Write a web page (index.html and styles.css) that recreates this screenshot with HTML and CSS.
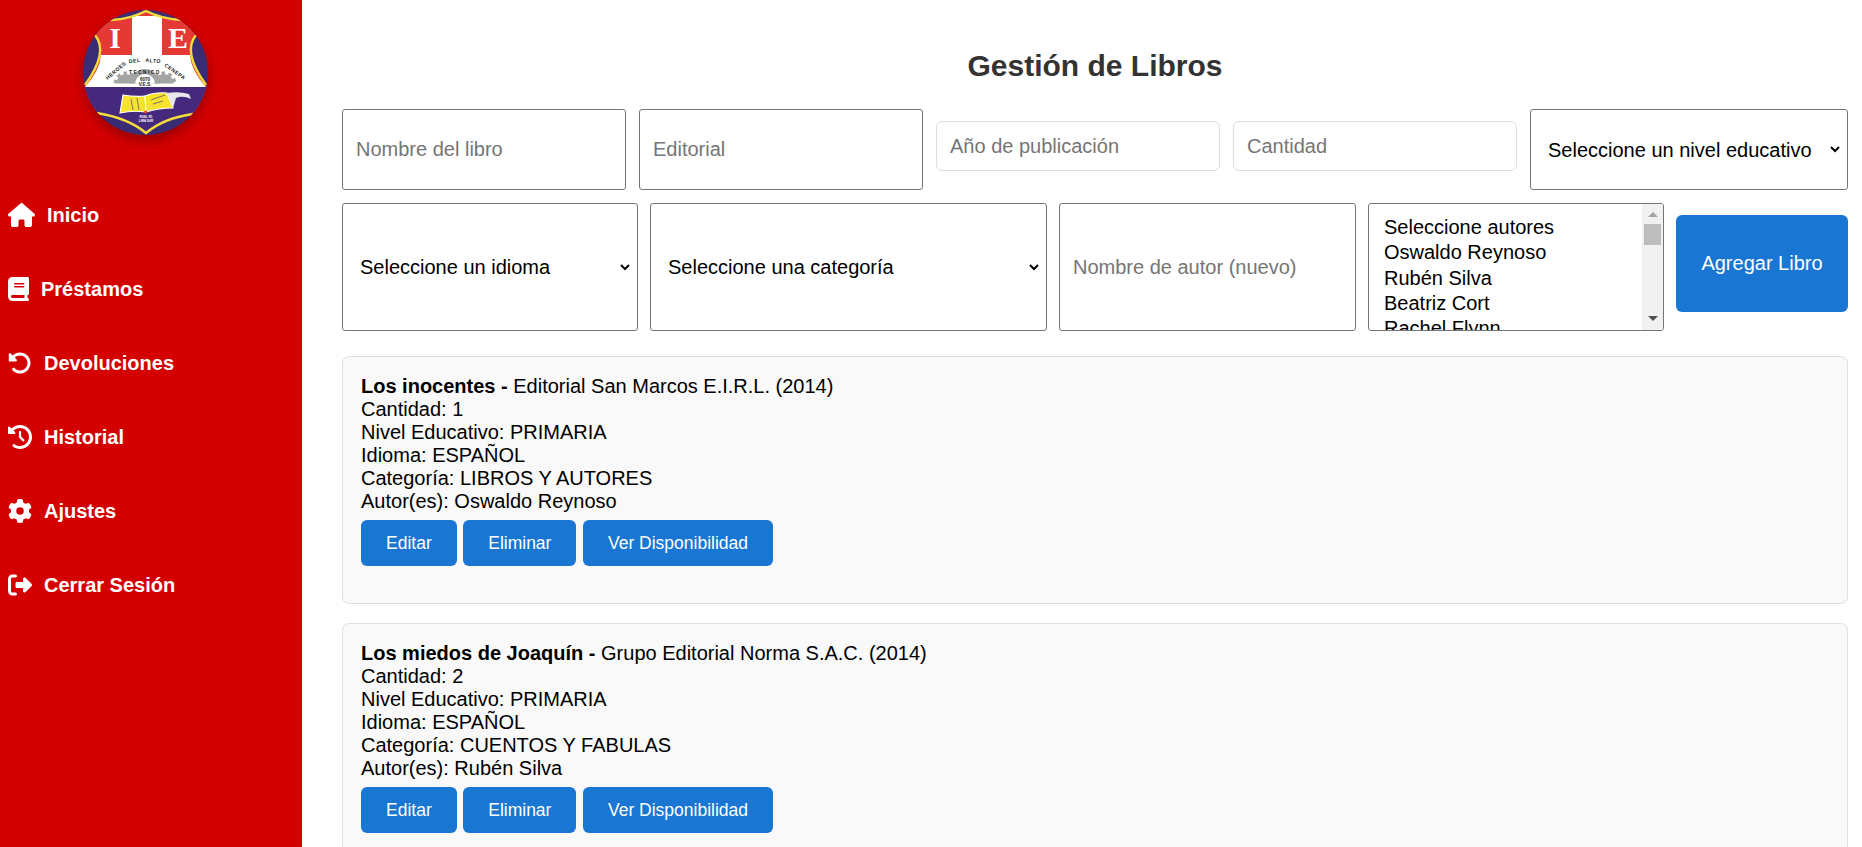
FILE: index.html
```html
<!DOCTYPE html>
<html lang="es">
<head>
    <meta charset="UTF-8">
    <meta name="viewport" content="width=device-width, initial-scale=1.0">
    <title>Gestión de Libros</title>
    <link rel="stylesheet" href="styles.css">
</head>
<body>
    <aside class="sidebar">
        <div class="logo">
            <svg viewBox="0 0 125 125" width="125" height="125" aria-label="Logo I.E.">
                <defs>
                    <clipPath id="logoClip"><circle cx="62.5" cy="62.5" r="62.5"/></clipPath>
                    <clipPath id="gearClip"><rect x="0" y="50" width="125" height="23.5"/></clipPath>
                </defs>
                <g clip-path="url(#logoClip)">
                    <rect width="125" height="125" fill="#382c74"/>
                    <!-- escudo -->
                    <path d="M12 25 L24 10 Q48 9 63 0 Q78 9 101 10 L113 25 Q99 42 123 76 L123 104 L110 104 Q81 108 63 124 Q45 108 14 103 L2 104 L2 76 Q26 42 12 25Z" fill="#e53935"/>
                    <rect x="49" y="6" width="30" height="39" fill="#fff"/>
                    <path d="M18 45 H107 Q108 60 123 77 H2 Q17 60 18 45Z" fill="#fff"/>
                    <path d="M0 77 H125 V103 L110 104 Q81 108 63 124 Q45 108 14 103 L0 103Z" fill="#45297d"/>
                    <path d="M28 10 Q48 9 63 1 Q78 9 100 10" fill="none" stroke="#f5dc3c" stroke-width="2.4"/>
                    <path d="M12 25 Q26 42 2 75" fill="none" stroke="#f5dc3c" stroke-width="2.4"/>
                    <path d="M113 25 Q99 42 123 75" fill="none" stroke="#f5dc3c" stroke-width="2.4"/>
                    <path d="M14 103 Q45 108 63 123 Q81 108 110 104" fill="none" stroke="#f5dc3c" stroke-width="2.4"/>
                    <text x="32" y="38" class="logo-letter" text-anchor="middle">I</text>
                    <text x="95" y="38" class="logo-letter" text-anchor="middle">E</text>
                    <!-- engranajes -->
                    <g clip-path="url(#gearClip)" fill="#a4a4a4" stroke="#a4a4a4">
                        <circle cx="43" cy="74" r="10" stroke="none"/>
                        <circle cx="43" cy="74" r="11" fill="none" stroke-width="3" stroke-dasharray="3.5 3.5"/>
                        <circle cx="81" cy="74" r="10" stroke="none"/>
                        <circle cx="81" cy="74" r="11" fill="none" stroke-width="3" stroke-dasharray="3.5 3.5"/>
                        <circle cx="62" cy="74" r="15" stroke="none"/>
                        <circle cx="62" cy="74" r="10" fill="#fff" stroke="none"/>
                    </g>
                    <text class="logo-word" transform="translate(34 62) rotate(-40)" text-anchor="middle">HEROES</text>
                    <text class="logo-word" transform="translate(52 52.5) rotate(-8)" text-anchor="middle">DEL</text>
                    <text class="logo-word" transform="translate(70 52.5) rotate(6)" text-anchor="middle">ALTO</text>
                    <text class="logo-word" transform="translate(91 63) rotate(35)" text-anchor="middle">CENEPA</text>
                    <text x="62" y="64" class="logo-tiny" text-anchor="middle" letter-spacing="1.6">TECNICO</text>
                    <text x="62" y="70.5" class="logo-tiny" text-anchor="middle">6070</text>
                    <text x="62" y="76" class="logo-tiny" text-anchor="middle">V.E.S.</text>
                    <!-- libro -->
                    <path d="M40 85 Q52 87 62 86 L63 102 Q50 100 37 103Z" fill="#f7e22e" stroke="#fff" stroke-width="1.1"/>
                    <path d="M62 86 Q72 82 84 83 L90 98 Q76 98 63 102Z" fill="#f7e22e" stroke="#fff" stroke-width="1.1"/>
                    <path d="M84 83 Q96 81 106 84 L108 89 Q100 85 93 88 L90 98Z" fill="#e8e6ee"/>
                    <path d="M48 89 L50 100 M54 88 L56 100 M68 90 L82 85 M70 94 L80 91" stroke="#666" stroke-width="0.9" fill="none"/>
                    <circle cx="62.7" cy="102" r="1.5" fill="#e53935"/>
                    <text x="63" y="108" class="logo-micro" text-anchor="middle">RGEL R1</text>
                    <text x="63" y="112" class="logo-micro" text-anchor="middle">LIMA SUR</text>
                </g>
            </svg>
        </div>
        <nav class="menu">
            <a class="menu-item" href="#">
                <svg class="menu-icon" viewBox="0 0 576 512"><path d="M575.8 255.5c0 18-15 32.1-32 32.1h-32l.7 160.2c0 2.7-.2 5.4-.5 8.1V472c0 22.1-17.9 40-40 40H456c-1.1 0-2.2 0-3.3-.1c-1.4 .1-2.8 .1-4.2 .1H416 392c-22.1 0-40-17.9-40-40V448 384c0-17.7-14.3-32-32-32H256c-17.7 0-32 14.3-32 32v64 24c0 22.1-17.9 40-40 40H160 128.1c-1.5 0-3-.1-4.5-.2c-1.2 .1-2.4 .2-3.6 .2H104c-22.1 0-40-17.9-40-40V360c0-.9 0-1.9 .1-2.8V287.6H32c-18 0-32-14-32-32.1c0-9 3-17 10-24L266.4 8c7-7 15-8 22-8s15 2 21 7L564.8 231.5c8 7 12 15 11 24z"/></svg>
                Inicio
            </a>
            <a class="menu-item" href="#">
                <svg class="menu-icon" viewBox="0 0 448 512"><path d="M96 0C43 0 0 43 0 96V416c0 53 43 96 96 96H384h32c17.7 0 32-14.3 32-32s-14.3-32-32-32V384c17.7 0 32-14.3 32-32V32c0-17.7-14.3-32-32-32H384 96zm0 384H352v64H96c-17.7 0-32-14.3-32-32s14.3-32 32-32zm32-240c0-8.8 7.2-16 16-16H336c8.8 0 16 7.2 16 16s-7.2 16-16 16H144c-8.8 0-16-7.2-16-16zm16 48H336c8.8 0 16 7.2 16 16s-7.2 16-16 16H144c-8.8 0-16-7.2-16-16s7.2-16 16-16z"/></svg>
                Préstamos
            </a>
            <a class="menu-item" href="#">
                <svg class="menu-icon" viewBox="0 0 512 512"><path d="M48.5 224H40c-13.3 0-24-10.7-24-24V72c0-9.7 5.8-18.5 14.8-22.2s19.3-1.7 26.2 5.2L98.6 96.6c87.6-86.5 228.7-86.2 315.8 1c87.5 87.5 87.5 229.3 0 316.8s-229.3 87.5-316.8 0c-12.5-12.5-12.5-32.8 0-45.3s32.8-12.5 45.3 0c62.5 62.5 163.8 62.5 226.3 0s62.5-163.8 0-226.3c-62.2-62.2-162.7-62.5-225.3-1L185 183c6.9 6.9 8.9 17.2 5.2 26.2s-12.5 14.8-22.2 14.8H48.5z"/></svg>
                Devoluciones
            </a>
            <a class="menu-item" href="#">
                <svg class="menu-icon" viewBox="0 0 512 512"><path d="M75 75L41 41C25.9 25.9 0 36.6 0 57.9V168c0 13.3 10.7 24 24 24H134.1c21.4 0 32.1-25.9 17-41l-30.8-30.8C155 85.5 203 64 256 64c106 0 192 86 192 192s-86 192-192 192c-40.8 0-78.6-12.7-109.7-34.4c-14.5-10.1-34.4-6.6-44.6 7.9s-6.6 34.4 7.9 44.6C151.2 495 201.7 512 256 512c141.4 0 256-114.6 256-256S397.4 0 256 0C185.3 0 121.3 28.7 75 75zm181 53c-13.3 0-24 10.7-24 24V256c0 6.4 2.5 12.5 7 17l72 72c9.4 9.4 24.6 9.4 33.9 0s9.4-24.6 0-33.9l-65-65V152c0-13.3-10.7-24-24-24z"/></svg>
                Historial
            </a>
            <a class="menu-item" href="#">
                <svg class="menu-icon" viewBox="0 0 512 512"><path d="M495.9 166.6c3.2 8.7 .5 18.4-6.4 24.6l-43.3 39.4c1.1 8.3 1.7 16.8 1.7 25.4s-.6 17.1-1.7 25.4l43.3 39.4c6.9 6.2 9.6 15.9 6.4 24.6c-4.4 11.9-9.7 23.3-15.8 34.3l-4.7 8.1c-6.6 11-14 21.4-22.1 31.2c-5.9 7.2-15.7 9.6-24.5 6.8l-55.7-17.7c-13.4 10.3-28.2 18.9-44 25.4l-12.5 57.1c-2 9.1-9 16.3-18.2 17.8c-13.8 2.3-28 3.5-42.5 3.5s-28.7-1.2-42.5-3.5c-9.2-1.5-16.2-8.7-18.2-17.8l-12.5-57.1c-15.8-6.5-30.6-15.1-44-25.4L83.1 425.9c-8.8 2.8-18.6 .3-24.5-6.8c-8.1-9.8-15.5-20.2-22.1-31.2l-4.7-8.1c-6.1-11-11.4-22.4-15.8-34.3c-3.2-8.7-.5-18.4 6.4-24.6l43.3-39.4C64.6 273.1 64 264.6 64 256s.6-17.1 1.7-25.4L22.4 191.2c-6.9-6.2-9.6-15.9-6.4-24.6c4.4-11.9 9.7-23.3 15.8-34.3l4.7-8.1c6.6-11 14-21.4 22.1-31.2c5.9-7.2 15.7-9.6 24.5-6.8l55.7 17.7c13.4-10.3 28.2-18.9 44-25.4l12.5-57.1c2-9.1 9-16.3 18.2-17.8C227.3 1.2 241.5 0 256 0s28.7 1.2 42.5 3.5c9.2 1.5 16.2 8.7 18.2 17.8l12.5 57.1c15.8 6.5 30.6 15.1 44 25.4l55.7-17.7c8.8-2.8 18.6-.3 24.5 6.8c8.1 9.8 15.5 20.2 22.1 31.2l4.7 8.1c6.1 11 11.4 22.4 15.8 34.3zM256 336a80 80 0 1 0 0-160 80 80 0 1 0 0 160z"/></svg>
                Ajustes
            </a>
            <a class="menu-item" href="#">
                <svg class="menu-icon" viewBox="0 0 512 512"><path d="M377.9 105.9L500.7 228.7c7.2 7.2 11.3 17.1 11.3 27.3s-4.1 20.1-11.3 27.3L377.9 406.1c-6.4 6.4-15 9.9-24 9.9c-18.7 0-33.9-15.2-33.9-33.9l0-62.1-128 0c-17.7 0-32-14.3-32-32l0-64c0-17.7 14.3-32 32-32l128 0 0-62.1c0-18.7 15.2-33.9 33.9-33.9c9 0 17.6 3.6 24 9.9zM160 96L96 96c-17.7 0-32 14.3-32 32l0 256c0 17.7 14.3 32 32 32l64 0c17.7 0 32 14.3 32 32s-14.3 32-32 32l-64 0c-53 0-96-43-96-96L0 128C0 75 43 32 96 32l64 0c17.7 0 32 14.3 32 32s-14.3 32-32 32z"/></svg>
                Cerrar Sesión
            </a>
        </nav>
    </aside>

    <main class="content">
        <h2 class="title">Gestión de Libros</h2>

        <form class="book-form">
            <div class="form-row first-row">
                <input class="field" type="text" placeholder="Nombre del libro">
                <input class="field" type="text" placeholder="Editorial">
                <input class="field soft" type="text" placeholder="Año de publicación">
                <input class="field soft" type="text" placeholder="Cantidad">
                <select class="picker level">
                    <option>Seleccione un nivel educativo</option>
                </select>
            </div>
            <div class="form-row second-row">
                <select class="picker wide-field">
                    <option>Seleccione un idioma</option>
                </select>
                <select class="picker category">
                    <option>Seleccione una categoría</option>
                </select>
                <input class="wide-field" type="text" placeholder="Nombre de autor (nuevo)">
                <div class="authors-box wide-field">
                    <select class="authors" multiple>
                        <option>Seleccione autores</option>
                        <option>Oswaldo Reynoso</option>
                        <option>Rubén Silva</option>
                        <option>Beatriz Cort</option>
                        <option>Rachel Flynn</option>
                        <option>Gloria Mendoza</option>
                        <option>Carlos Rojas</option>
                    </select>
                    <div class="list-scrollbar">
                        <span class="arrow-up"></span>
                        <span class="thumb"></span>
                        <span class="arrow-down"></span>
                    </div>
                </div>
                <button class="add-btn" type="button">Agregar Libro</button>
            </div>
        </form>

        <section class="book-card">
            <strong>Los inocentes -</strong> Editorial San Marcos E.I.R.L. (2014)<br>
            Cantidad: 1<br>
            Nivel Educativo: PRIMARIA<br>
            Idioma: ESPAÑOL<br>
            Categoría: LIBROS Y AUTORES<br>
            Autor(es): Oswaldo Reynoso
            <div class="card-actions">
                <button type="button">Editar</button>
                <button type="button">Eliminar</button>
                <button type="button">Ver Disponibilidad</button>
            </div>
        </section>

        <section class="book-card">
            <strong>Los miedos de Joaquín -</strong> Grupo Editorial Norma S.A.C. (2014)<br>
            Cantidad: 2<br>
            Nivel Educativo: PRIMARIA<br>
            Idioma: ESPAÑOL<br>
            Categoría: CUENTOS Y FABULAS<br>
            Autor(es): Rubén Silva
            <div class="card-actions">
                <button type="button">Editar</button>
                <button type="button">Eliminar</button>
                <button type="button">Ver Disponibilidad</button>
            </div>
        </section>
    </main>
</body>
</html>
```

FILE: styles.css
```css
html, body {
    height: 100%;
    margin: 0;
    overflow: hidden;
}
body {
    font-family: "Liberation Sans", Arial, sans-serif;
    display: flex;
    background-color: #fff;
}

/* Sidebar */
.sidebar {
    width: 302px;
    flex-shrink: 0;
    background-color: #d40000;
    box-sizing: border-box;
}
.logo {
    width: 125px;
    height: 125px;
    margin: 10px 0 0 83px;
    border-radius: 50%;
    box-shadow: 0 5px 12px rgba(0, 0, 0, 0.3);
}
.logo svg {
    display: block;
}
.logo-letter {
    font-family: "Liberation Serif", serif;
    font-weight: bold;
    font-size: 30px;
    fill: #fff;
}
.logo-word {
    font-weight: bold;
    font-size: 5.2px;
    letter-spacing: 0.5px;
    fill: #222;
}
.logo-tiny {
    font-weight: bold;
    font-size: 4.6px;
    fill: #222;
}
.logo-micro {
    font-weight: bold;
    font-size: 3px;
    fill: #fff;
}
.menu {
    margin-top: 63px;
    display: flex;
    flex-direction: column;
    gap: 40px;
    padding-left: 8px;
}
.menu-item {
    display: flex;
    align-items: center;
    gap: 12px;
    height: 34px;
    color: #fff;
    font-size: 20px;
    font-weight: bold;
    text-decoration: none;
}
.menu-icon {
    height: 24px;
    fill: #fff;
    flex-shrink: 0;
}

/* Content */
.content {
    flex: 1;
    min-width: 0;
    padding: 0 14px 0 40px;
}
.title {
    margin: 48px 0 25px;
    text-align: center;
    color: #333;
    font-size: 30px;
    line-height: 36px;
}
.form-row {
    display: flex;
}
.first-row {
    height: 81px;
    margin-bottom: 13px;
    gap: 13px;
}
.second-row {
    height: 128px;
    margin-bottom: 25px;
    gap: 12px;
}
.form-row input,
.form-row select {
    box-sizing: border-box;
    font-family: inherit;
    font-size: 20px;
    background-color: #fff;
    border: 1px solid #767676;
    border-radius: 3px;
    color: #000;
}
.form-row input {
    padding: 0 13px;
}
.form-row input::placeholder {
    color: #757575;
}
/* own chevron, the default one sits too close to the border */
.form-row select.picker {
    appearance: none;
    padding: 0 30px 0 17px;
    background-image: url("data:image/svg+xml,%3Csvg xmlns='http://www.w3.org/2000/svg' width='10' height='7' viewBox='0 0 10 7'%3E%3Cpath d='M1 1l4 4 4-4' fill='none' stroke='%23000' stroke-width='2'/%3E%3C/svg%3E");
    background-repeat: no-repeat;
    background-position: right 7px center;
}
.field {
    width: 284px;
    flex: none;
}
.wide-field {
    width: 296px;
    flex: none;
}
.second-row input.wide-field {
    width: 297px;
}
.form-row input.soft {
    align-self: flex-start;
    height: 50px;
    margin-top: 12px;
    border: 1px solid #ddd;
    border-radius: 6px;
}
.level {
    width: 318px;
    flex: none;
}
.category {
    width: 397px;
    flex: none;
}
.authors-box {
    position: relative;
    height: 128px;
}
.form-row select.authors {
    display: block;
    width: 100%;
    height: 100%;
    padding: 12px 0 0 12px;
    overflow: hidden;
}
.authors option {
    padding: 0 0 0 3px;
    min-height: 25.3px;
}
.list-scrollbar {
    position: absolute;
    top: 1px;
    right: 1px;
    bottom: 1px;
    width: 21px;
    display: flex;
    flex-direction: column;
    align-items: center;
    background-color: #f1f1f1;
    border-radius: 0 2px 2px 0;
}
.arrow-up,
.arrow-down {
    width: 0;
    height: 0;
    border-left: 5px solid transparent;
    border-right: 5px solid transparent;
}
.arrow-up {
    margin-top: 8px;
    border-bottom: 5px solid #a3a3a3;
}
.thumb {
    width: 17px;
    height: 21px;
    margin-top: 7px;
    background-color: #bdbdbd;
}
.arrow-down {
    margin-top: auto;
    margin-bottom: 9px;
    border-top: 5px solid #505050;
}
.add-btn {
    width: 172px;
    height: 97px;
    flex: none;
    margin-top: 12px;
    background-color: #1976d2;
    border: none;
    border-radius: 6px;
    color: #fff;
    font-family: inherit;
    font-size: 20px;
}

/* Cards */
.book-card {
    box-sizing: border-box;
    height: 248px;
    margin-bottom: 19.4px;
    padding: 18px 18px 0;
    background-color: #f9f9f9;
    border: 1px solid #e0e0e0;
    border-radius: 7px;
    font-size: 20px;
    line-height: 23px;
    color: #000;
}
.card-actions {
    display: flex;
    gap: 6.5px;
    margin-top: 7px;
}
.card-actions button {
    height: 46px;
    padding: 0 25px;
    background-color: #1976d2;
    border: none;
    border-radius: 6px;
    color: #fff;
    font-family: inherit;
    font-size: 17.5px;
}
```
